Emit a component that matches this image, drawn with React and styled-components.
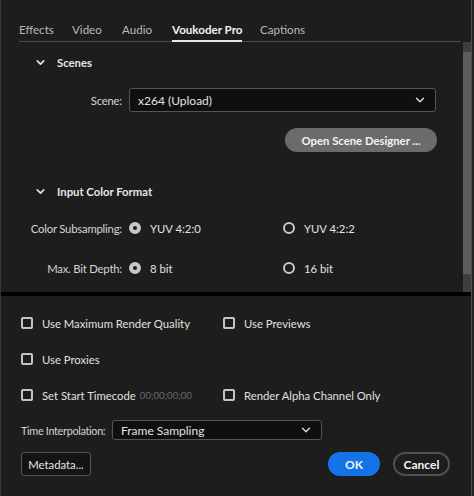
import React from 'react';
import styled, { createGlobalStyle } from 'styled-components';
import { ChevronDown } from 'lucide-react';

const GlobalStyle = createGlobalStyle`
  html, body {
    margin: 0;
    padding: 0;
    background: #1d1d1d;
    overflow: hidden;
  }
  * { box-sizing: border-box; }
`;

const Window = styled.div`
  width: 474px;
  height: 496px;
  display: flex;
  flex-direction: column;
  background: #1d1d1d;
  border-left: 1px solid #363636;
  border-right: 2px solid #232323;
  font-family: Lato, "Open Sans", sans-serif;
  font-size: 11.3px;
  color: #d4d4d4;
  position: relative;
`;

const EdgeLine = styled.div`
  position: absolute;
  top: 0;
  right: 0;
  width: 1px;
  height: 100%;
  background: #4e4e4e;
`;

const Upper = styled.div`
  height: 292px;
  display: flex;
  flex-direction: column;
  padding: 20px 1px 0 18px;
`;

const Tabs = styled.div`
  display: flex;
  height: 22px;
  width: 442px;
  border-bottom: 1px solid #4a4a4a;
`;

const Tab = styled.div`
  width: ${p => p.$w}px;
  height: 22px;
  line-height: 20px;
  font-size: 11.6px;
  color: ${p => (p.$active ? '#f2f2f2' : '#b9b9b9')};
  font-weight: ${p => (p.$active ? 700 : 400)};
  margin-bottom: -1px;
  white-space: nowrap;
`;

const TabLabel = styled.span`
  display: inline-block;
  height: 22px;
  border-bottom: ${p => (p.$active ? '2px solid #e8e8e8' : '2px solid transparent')};
`;

const Body = styled.div`
  flex: 1;
  display: flex;
`;

const Content = styled.div`
  flex: 1;
  display: flex;
  flex-direction: column;
  padding-right: 26px;
`;

const Scrollbar = styled.div`
  width: 8px;
  background: #3f3f3f;
  padding: 10px 0 18px;
  display: flex;
`;

const Thumb = styled.div`
  flex: 1;
  background: #5c5c5c;
`;

const SectionHeader = styled.div`
  display: flex;
  align-items: center;
  height: 40px;
  margin-top: ${p => p.$top || 0}px;
  padding-left: 15px;
  gap: 10px;
  font-weight: 700;
  font-size: 11.3px;
  color: #e6e6e6;
  svg { color: #e6e6e6; }
`;

const FieldRow = styled.div`
  display: flex;
  align-items: center;
  height: ${p => p.$h || 24}px;
  margin-top: ${p => p.$top || 0}px;
  gap: 7px;
`;

const Label = styled.div`
  width: 103px;
  text-align: right;
  color: #d4d4d4;
  white-space: nowrap;
  letter-spacing: -0.2px;
`;

const Select = styled.div`
  width: ${p => p.$w}px;
  height: ${p => p.$h || 24}px;
  background: #0f0f0f;
  border: 1px solid #555;
  border-radius: 3px;
  display: flex;
  align-items: center;
  justify-content: space-between;
  padding: 0 8px 0 8px;
  color: #e2e2e2;
  font-size: 12px;
  svg { color: #d8d8d8; }
`;

const ButtonRow = styled.div`
  display: flex;
  justify-content: flex-end;
  margin-top: 16px;
`;

const PillButton = styled.div`
  width: 152px;
  height: 24px;
  border-radius: 12px;
  background: #6b6b6b;
  color: #f4f4f4;
  font-weight: 700;
  display: flex;
  align-items: center;
  justify-content: center;
`;

const RadioGroup = styled.div`
  display: flex;
`;

const RadioOption = styled.div`
  width: 154px;
  display: flex;
  align-items: center;
  gap: 9px;
  color: #e2e2e2;
`;

const Radio = styled.span`
  width: 12px;
  height: 12px;
  border-radius: 50%;
  border: 2px solid #c9c9c9;
  background: ${p => (p.$on ? '#c9c9c9' : 'transparent')};
  display: flex;
  align-items: center;
  justify-content: center;
  &::after {
    content: '';
    width: 4px;
    height: 4px;
    border-radius: 50%;
    background: ${p => (p.$on ? '#1d1d1d' : 'transparent')};
  }
`;

const Divider = styled.div`
  height: 4px;
  background: #000;
  margin-right: 1px;
`;

const Lower = styled.div`
  flex: 1;
  display: flex;
  flex-direction: column;
  padding: 17px 0 0 20px;
`;

const CheckRow = styled.div`
  display: flex;
  align-items: center;
  height: 20px;
  margin-bottom: 16px;
`;

const CheckItem = styled.div`
  width: ${p => p.$w || 202}px;
  display: flex;
  align-items: center;
  gap: 9px;
  color: #e0e0e0;
  white-space: nowrap;
`;

const Box = styled.span`
  width: 12px;
  height: 12px;
  border: 2px solid #c4c4c4;
  border-radius: 2px;
`;

const Timecode = styled.span`
  color: #6a6a6a;
  font-size: 9.6px;
  margin-left: -5px;
`;

const InterpRow = styled.div`
  display: flex;
  align-items: center;
  gap: 6px;
  height: 20px;
  margin-top: -1px;
`;

const InterpLabel = styled.span`
  width: 85px;
  white-space: nowrap;
  font-size: 10.8px;
  letter-spacing: -0.3px;
`;

const Footer = styled.div`
  display: flex;
  align-items: center;
  margin-top: 12px;
  padding-right: 22px;
`;

const MetaButton = styled.div`
  width: 70px;
  height: 24px;
  border: 1px solid #555;
  border-radius: 3px;
  background: #141414;
  color: #e6e6e6;
  display: flex;
  align-items: center;
  justify-content: center;
`;

const Spacer = styled.div`
  flex: 1;
`;

const DialogButton = styled.div`
  height: 24px;
  border-radius: 12px;
  display: flex;
  align-items: center;
  justify-content: center;
  font-weight: 700;
  font-size: 12px;
  width: ${p => p.$w}px;
  margin-left: ${p => p.$ml || 0}px;
  color: #f4f4f4;
  background: ${p => (p.$primary ? '#1473e6' : 'transparent')};
  border: ${p => (p.$primary ? 'none' : '2px solid #4f4f4f')};
`;

const tabs = [
  { name: 'Effects', w: 53 },
  { name: 'Video', w: 50 },
  { name: 'Audio', w: 50 },
  { name: 'Voukoder Pro', w: 88 },
  { name: 'Captions', w: 60 },
];

export default function App() {
  return (
    <>
      <GlobalStyle />
      <Window>
        <EdgeLine />
        <Upper>
          <Tabs>
            {tabs.map(t => (
              <Tab key={t.name} $w={t.w} $active={t.name === 'Voukoder Pro'}>
                <TabLabel $active={t.name === 'Voukoder Pro'}>{t.name}</TabLabel>
              </Tab>
            ))}
          </Tabs>
          <Body>
            <Content>
              <SectionHeader>
                <ChevronDown size={13} strokeWidth={3} />
                Scenes
              </SectionHeader>
              <FieldRow $top={6}>
                <Label>Scene:</Label>
                <Select $w={307}>
                  x264 (Upload)
                  <ChevronDown size={14} strokeWidth={2.5} />
                </Select>
              </FieldRow>
              <ButtonRow>
                <PillButton>Open Scene Designer ...</PillButton>
              </ButtonRow>
              <SectionHeader $top={19}>
                <ChevronDown size={13} strokeWidth={3} />
                Input Color Format
              </SectionHeader>
              <FieldRow $h={20} $top={7}>
                <Label>Color Subsampling:</Label>
                <RadioGroup>
                  <RadioOption><Radio $on />YUV 4:2:0</RadioOption>
                  <RadioOption><Radio />YUV 4:2:2</RadioOption>
                </RadioGroup>
              </FieldRow>
              <FieldRow $h={20} $top={20}>
                <Label>Max. Bit Depth:</Label>
                <RadioGroup>
                  <RadioOption><Radio $on />8 bit</RadioOption>
                  <RadioOption><Radio />16 bit</RadioOption>
                </RadioGroup>
              </FieldRow>
            </Content>
            <Scrollbar><Thumb /></Scrollbar>
          </Body>
        </Upper>
        <Divider />
        <Lower>
          <CheckRow>
            <CheckItem><Box />Use Maximum Render Quality</CheckItem>
            <CheckItem><Box />Use Previews</CheckItem>
          </CheckRow>
          <CheckRow>
            <CheckItem><Box />Use Proxies</CheckItem>
          </CheckRow>
          <CheckRow>
            <CheckItem><Box />Set Start Timecode <Timecode>00;00;00;00</Timecode></CheckItem>
            <CheckItem><Box />Render Alpha Channel Only</CheckItem>
          </CheckRow>
          <InterpRow>
            <InterpLabel>Time Interpolation:</InterpLabel>
            <Select $w={210} $h={20}>
              Frame Sampling
              <ChevronDown size={14} strokeWidth={2.5} />
            </Select>
          </InterpRow>
          <Footer>
            <MetaButton>Metadata...</MetaButton>
            <Spacer />
            <DialogButton $primary $w={52}>OK</DialogButton>
            <DialogButton $w={57} $ml={13}>Cancel</DialogButton>
          </Footer>
        </Lower>
      </Window>
    </>
  );
}
